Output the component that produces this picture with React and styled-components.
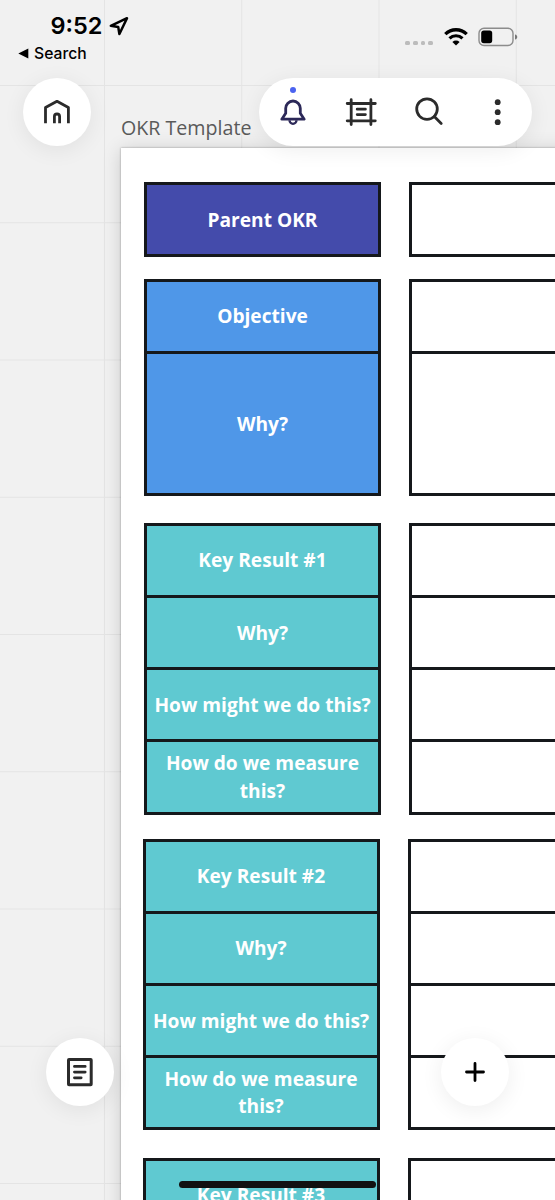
import React from "react"
import styled, { createGlobalStyle } from "styled-components"


const GlobalStyle = createGlobalStyle`
  *{
    box-sizing: border-box;
  }
  body{
    margin: 0;
    background: #f1f1f1;
  }
`
const Screen = styled.div`
  position: relative;
  width: 555px;
  height: 1200px;
  overflow: hidden;
  background-color: #f1f1f1;
  background-image:
    linear-gradient(to right, #e4e4e4 1.4px, transparent 1.4px),
    linear-gradient(to bottom, #e4e4e4 1.4px, transparent 1.4px);
  background-size: 137.25px 137.25px;
  background-position: 104px 85px;
`
const Board = styled.main`
  display: flex;
  flex-direction: column;
  width: 900px;
  padding: 114px 0 0 121px;
`
const BoardTitle = styled.h1`
  margin: 0;
  height: 34px;
  font: 400 19.65px/27px "Open Sans", sans-serif;
  color: #5a5a5a;
`
const Frame = styled.section`
  height: 1200px;
  padding-top: 34px;
  background: #fff;
  box-shadow: 0 0 2px rgba(0, 0, 0, 0.35), 0 2px 18px rgba(0, 0, 0, 0.16);
`
const Group = styled.div`
  display: grid;
  grid-template-columns: 237px 600px;
  column-gap: 28px;
  margin-left: ${(props) => props.$left}px;
  margin-bottom: ${(props) => props.$gap}px;
`
const Column = styled.div`
  display: flex;
  flex-direction: column;
`
const Cell = styled.div`
  display: flex;
  align-items: center;
  justify-content: center;
  height: ${(props) => props.$height + 3}px;
  padding-top: 1.6px;
  border: 3px solid #15181b;
  background: ${(props) => props.$color};
  font: 700 19.15px/27.3px "Open Sans", sans-serif;
  color: #fff;
  text-align: center;
  & + &{
    margin-top: -3px;
  }
`
const Overlay = styled.div`
  position: absolute;
  inset: 0;
  display: flex;
  flex-direction: column;
  justify-content: space-between;
`
const StatusBar = styled.header`
  display: flex;
  justify-content: space-between;
  height: 78px;
  padding: 12px 37px 0 18px;
  font-family: Inter, sans-serif;
  color: #000;
`
const Clock = styled.div`
  display: flex;
  align-items: center;
  column-gap: 7px;
  height: 27px;
  padding-left: 32.5px;
  font-size: 23.5px;
  font-weight: 600;
`
const Back = styled.div`
  display: flex;
  align-items: center;
  column-gap: 5px;
  height: 28px;
  font-size: 15.7px;
  font-weight: 500;
`
const Indicators = styled.div`
  display: flex;
  align-items: center;
  height: 49px;
`
const Signal = styled.div`
  display: flex;
  column-gap: 3px;
  margin: 13px 11px 0 0;
`
const SignalDot = styled.i`
  width: 4.7px;
  height: 4.7px;
  border-radius: 1.5px;
  background: #bcbcbc;
`
const TopBar = styled.nav`
  display: flex;
  justify-content: space-between;
  padding: 0 23px 0 22.7px;
`
const RoundButton = styled.button`
  display: flex;
  align-items: center;
  justify-content: center;
  width: 68.4px;
  height: 68.4px;
  padding: 0;
  border: 0;
  border-radius: 50%;
  background: #fff;
  box-shadow: 0 4px 22px rgba(0, 0, 0, 0.07);
`
const Toolbar = styled.div`
  display: grid;
  grid-template-columns: repeat(4, 1fr);
  width: 273.3px;
  height: 68.4px;
  border-radius: 35px;
  background: #fff;
  box-shadow: 0 4px 22px rgba(0, 0, 0, 0.07);
`
const ToolButton = styled.button`
  position: relative;
  display: flex;
  align-items: center;
  justify-content: center;
  padding: 0;
  border: 0;
  background: none;
`
const Badge = styled.span`
  position: absolute;
  top: 9px;
  left: calc(50% - 3px);
  width: 6px;
  height: 6px;
  border-radius: 50%;
  background: #4b63f0;
`
const Footer = styled.footer`
  display: flex;
  flex-direction: column;
  height: 162.3px;
`
const BottomBar = styled.div`
  display: flex;
  justify-content: space-between;
  padding: 0 46px 0 45.7px;
`
const HomeIndicator = styled.div`
  width: 197.5px;
  height: 7px;
  margin: 75.3px 0 0 178.8px;
  border-radius: 4px;
  background: #111;
`
const Icon = styled.svg`
  display: block;
  flex: none;
  fill: none;
  stroke: ${(props) => props.$color || "#2b2b2b"};
  stroke-width: 2.8;
  stroke-linejoin: round;
`
const BatteryIcon = styled(Icon)`
  margin-left: 10px;
`

const indigo = "#444bab"
const blue = "#4f97e8"
const teal = "#5fc9d1"

const keyResult = (number) => [
  { text: "Key Result #" + number, height: 72.2 },
  { text: "Why?", height: 72.2 },
  { text: "How might we do this?", height: 72.2 },
  { text: "How do we measure this?", height: 72.2 },
]

const groups = [
  { color: indigo, left: 23, gap: 21.4, rows: [{ text: "Parent OKR", height: 72.2 }] },
  {
    color: blue,
    left: 23,
    gap: 26.8,
    rows: [
      { text: "Objective", height: 72.2 },
      { text: "Why?", height: 142.2 },
    ],
  },
  { color: teal, left: 23, gap: 24, rows: keyResult(1) },
  { color: teal, left: 21.5, gap: 27.4, rows: keyResult(2) },
  { color: teal, left: 21.5, gap: 0, rows: keyResult(3) },
]

const OkrGroup = ({ group }) => (
  <Group $left={group.left} $gap={group.gap}>
    <Column>
      {group.rows.map((row) => (
        <Cell key={row.text} $height={row.height} $color={group.color}>{row.text}</Cell>
      ))}
    </Column>
    <Column>
      {group.rows.map((row) => (
        <Cell key={row.text} $height={row.height} $color="#fff"/>
      ))}
    </Column>
  </Group>
)

const Status = () => (
  <StatusBar>
    <div>
      <Clock>
        9:52
        <Icon width="20" height="20" viewBox="0 0 20 20" $color="#000">
          <path d="M1.8 9.8 18 2.2 10.4 18 9.2 10.9Z" strokeWidth="2.5"/>
        </Icon>
      </Clock>
      <Back>
        <svg width="11" height="11" viewBox="0 0 11 11">
          <path d="M0.3 5.5 10.3 0.4V10.6Z"/>
        </svg>
        Search
      </Back>
    </div>
    <Indicators>
      <Signal>
        <SignalDot/>
        <SignalDot/>
        <SignalDot/>
        <SignalDot/>
      </Signal>
      <Icon width="24" height="18" viewBox="0 0 24 18" $color="#000">
        <path d="M1.3 6.1a15.3 15.3 0 0 1 21.4 0" strokeWidth="3.3"/>
        <path d="M5.5 10.4a9.3 9.3 0 0 1 13 0" strokeWidth="3.1"/>
        <path d="M12 17.5 8.4 13.9a5.2 5.2 0 0 1 7.2 0Z" fill="#000" stroke="none"/>
      </Icon>
      <BatteryIcon width="40" height="20" viewBox="0 0 40 20" $color="#8c8c8c">
        <rect x="1" y="1.2" width="34" height="17.3" rx="5" strokeWidth="1.4"/>
        <rect x="3.2" y="3.5" width="11" height="12.7" rx="2.6" fill="#000" stroke="none"/>
        <path d="M37 7.4c3 .6 3 4.4 0 5Z" fill="#777" stroke="none"/>
      </BatteryIcon>
    </Indicators>
  </StatusBar>
)

export default function App() {
  return(
    <Screen>
      <GlobalStyle/>
      <Board>
        <BoardTitle>OKR Template</BoardTitle>
        <Frame>
          {groups.map((group, index) => (
            <OkrGroup key={index} group={group}/>
          ))}
        </Frame>
      </Board>
      <Overlay>
        <div>
          <Status/>
          <TopBar>
            <RoundButton aria-label="Home">
              <Icon width="28" height="28" viewBox="0 0 28 28">
                <path d="M2.5 25.3V9.6L14 3.3 25.4 9.6V25.3"/>
                <path d="M11.4 25.3V18.6a2.6 2.6 0 0 1 5.2 0V25.3"/>
              </Icon>
            </RoundButton>
            <Toolbar>
              <ToolButton aria-label="Notifications">
                <Badge/>
                <Icon width="28" height="28" viewBox="0 0 28 28" $color="#2c2858">
                  <path d="M2.8 21.2 6.7 15.3V10.3a7.3 7.3 0 0 1 14.6 0V15.3L25.2 21.2Z"/>
                  <path d="M10.5 22.3a3.5 3.5 0 0 0 7 0" strokeWidth="2.3"/>
                </Icon>
              </ToolButton>
              <ToolButton aria-label="Frames">
                <Icon width="32" height="32" viewBox="0 0 32 32" strokeLinecap="round">
                  <path d="M6.2 3.7V28.5M25.9 3.7V28.5M2.2 7.5H30.3M2.2 24.8H30.3M12.2 13.2H20.4M12.2 18.6H20.4"/>
                </Icon>
              </ToolButton>
              <ToolButton aria-label="Search">
                <Icon width="30" height="30" viewBox="0 0 30 30" strokeLinecap="round">
                  <circle cx="12" cy="12.1" r="10.3"/>
                  <path d="M19.3 19.6 26.2 26.5"/>
                </Icon>
              </ToolButton>
              <ToolButton aria-label="More">
                <Icon width="28" height="28" viewBox="0 0 28 28">
                  <g fill="#2b2b2b" stroke="none">
                    <circle cx="13.7" cy="4.2" r="2.9"/>
                    <circle cx="13.7" cy="14.2" r="2.9"/>
                    <circle cx="13.7" cy="24.2" r="2.9"/>
                  </g>
                </Icon>
              </ToolButton>
            </Toolbar>
          </TopBar>
        </div>
        <Footer>
          <BottomBar>
            <RoundButton aria-label="Notes">
              <Icon width="30" height="30" viewBox="0 0 30 30" strokeLinecap="round">
                <rect x="3.5" y="2.5" width="22.7" height="25.2" rx="0.5" strokeWidth="3"/>
                <path d="M9.4 9.4H20.2M9.4 15.1H20.2M9.4 20.8H16.2" strokeWidth="2.7"/>
              </Icon>
            </RoundButton>
            <RoundButton aria-label="Add">
              <Icon width="24" height="24" viewBox="0 0 24 24" $color="#000" strokeLinecap="round">
                <path d="M12 3.5V20.5M3.5 12H20.5"/>
              </Icon>
            </RoundButton>
          </BottomBar>
          <HomeIndicator/>
        </Footer>
      </Overlay>
    </Screen>
  )
}
